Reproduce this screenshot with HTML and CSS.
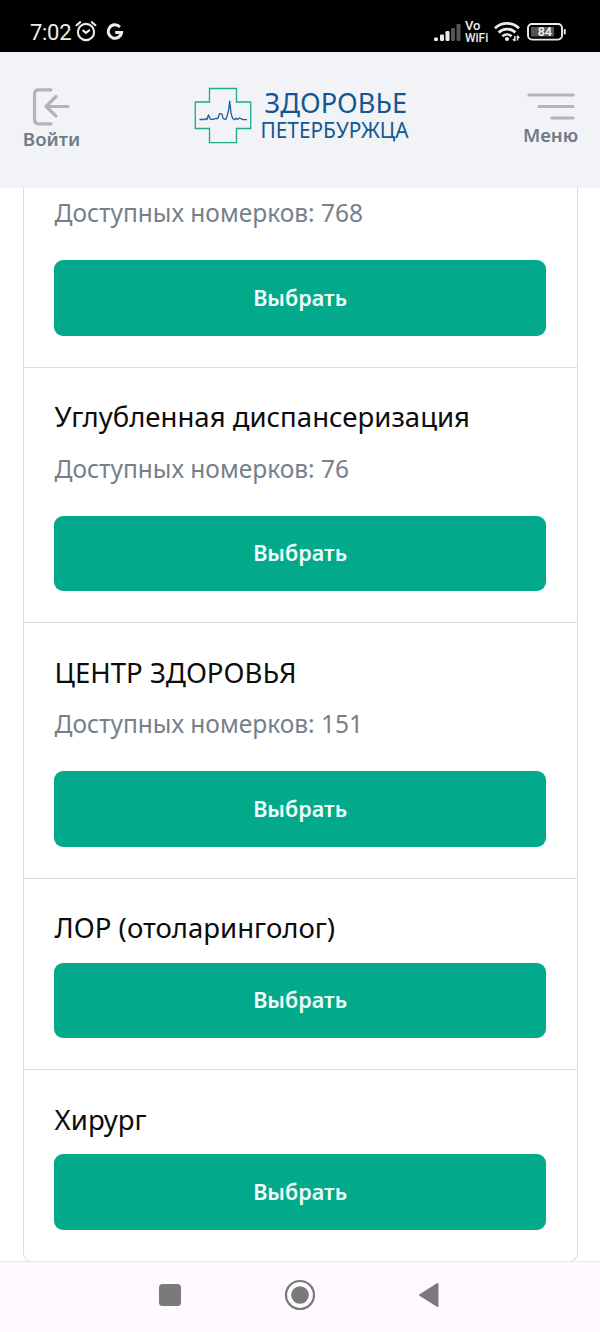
FILE: index.html
```html
<!DOCTYPE html>
<html lang="ru">
<head>
<meta charset="utf-8">
<title>Здоровье петербуржца</title>
<link rel="stylesheet" href="styles.css">
</head>
<body>
<div class="screen">
  <div class="status">
    <span class="clock">7:02</span>
    <svg class="alarm" width="24" height="22" viewBox="0 0 24 22" fill="none" stroke="#ececec" stroke-width="2.1" stroke-linecap="round" stroke-linejoin="round"><circle cx="12" cy="12" r="8.1"/><path d="M2.6 5.2 6.2 2.1M21.4 5.2 17.8 2.1M9.2 10.6l2.8 2.3 3.2-2.5"/></svg>
    <svg class="google" width="18" height="18" viewBox="0 0 18 18" fill="none" stroke="#ececec" stroke-width="3"><path d="M13.9 4A6.7 6.7 0 1 0 15.6 9.6H9.2"/></svg>
    <span class="spacer"></span>
    <svg class="signal" width="28" height="20" viewBox="0 0 28 20"><g fill="#ececec"><rect x="0" y="13.5" width="4" height="3.5" rx="1.2"/><rect x="6" y="10.5" width="4" height="6.5" rx="1.2"/><rect x="11.5" y="7" width="4" height="10" rx="1.2"/></g><g fill="#555"><rect x="17" y="4" width="4" height="13" rx="1.2"/><rect x="22.5" y="0" width="4" height="17" rx="1.2"/></g></svg>
    <span class="vowifi"><span class="vo">Vo</span><span>WiFi</span></span>
    <svg class="wifi" width="27" height="21" viewBox="0 0 27 21" fill="none" stroke="#ececec" stroke-width="2.7"><path d="M1 7.3a17.2 17.2 0 0 1 24 0M4.6 11.5a12 12 0 0 1 16.8 0M8.4 15.2a7 7 0 0 1 9.2 0"/><circle cx="13" cy="18" r="2.1" fill="#ececec" stroke="none"/><path stroke-width="1.5" d="M20.8 20v-5M19 18l1.8 2M23.5 14.5v5M23.5 15l1.8 2"/></svg>
    <svg class="battery" width="40" height="18" viewBox="0 0 40 18"><rect x="1" y="1" width="34" height="15.6" rx="4" fill="none" stroke="#ececec" stroke-width="1.9"/><rect x="4" y="4" width="23" height="9.6" rx="1" fill="#555"/><rect x="36.8" y="6" width="1.9" height="5.5" rx=".8" fill="#ececec"/><text x="17.8" y="13.3" text-anchor="middle" class="battery-text">84</text></svg>
  </div>
  <header class="header">
    <div class="action login">
      <svg width="38" height="38" viewBox="0 0 38 38" fill="none" stroke="#b2b3bd" stroke-width="3.2" stroke-linecap="round" stroke-linejoin="round"><path d="M19 1.8H6.5q-4 0-4 4v26q0 4 4 4H19M36 18.5H15M24 8.5l-10 10 10 9.5"/></svg>
      <span>Войти</span>
    </div>
    <svg class="logo" width="220" height="62" viewBox="0 0 220 62"><path d="M19.5 3.5h27v13.5h14.2v26.5H46.5v14.2h-27V43.5H5.3V17h14.2z" fill="none" stroke="#20a98b" stroke-width="1.3"/><path d="M9.5 34.5h5l1.3-1 1.2 1 1.5-4.7 1.7 4.2 3 .4 2.3-.9h2.4l1.5-4.8 2.5.1 1.3 4.8 2.7.8 1.2-3.6 1.4-5 1.2-9.7 1.4 12.5 1.6 4.9 2 1.2 1.3-1.5 1.5 1.2 1.7-1.3 1.8.5 2 1H57" fill="none" stroke="#235f98" stroke-width="1.3" stroke-linejoin="round"/><text class="logo-text logo-big" x="74.5" y="28" textLength="142.5" lengthAdjust="spacingAndGlyphs">ЗДОРОВЬЕ</text><text class="logo-text logo-small" x="70.5" y="53" textLength="148" lengthAdjust="spacingAndGlyphs">ПЕТЕРБУРЖЦА</text></svg>
    <div class="action menu">
      <svg width="48" height="28" viewBox="0 0 48 28" stroke="#b2b3bd" stroke-width="3.2" stroke-linecap="round"><path d="M2 2h44M12 13.5h34M25 25h21"/></svg>
      <span>Меню</span>
    </div>
  </header>
  <main class="content">
    <section class="list">
      <article class="item partial"><p>Доступных номерков: 768</p><button>Выбрать</button></article>
      <article class="item"><h2>Углубленная диспансеризация</h2><p>Доступных номерков: 76</p><button>Выбрать</button></article>
      <article class="item"><h2>ЦЕНТР ЗДОРОВЬЯ</h2><p>Доступных номерков: 151</p><button>Выбрать</button></article>
      <article class="item"><h2>ЛОР (отоларинголог)</h2><button>Выбрать</button></article>
      <article class="item"><h2>Хирург</h2><button>Выбрать</button></article>
    </section>
  </main>
  <nav class="nav">
    <svg width="22" height="22" viewBox="0 0 22 22"><rect width="22" height="22" rx="3.5" fill="#7a7a7a"/></svg>
    <svg width="32" height="32" viewBox="0 0 32 32"><circle cx="16" cy="16" r="14" fill="none" stroke="#7a7a7a" stroke-width="2.2"/><circle cx="16" cy="16" r="8.8" fill="#7a7a7a"/></svg>
    <svg width="22" height="26" viewBox="0 0 22 26"><path d="M2 13 19.5 2v22z" fill="#7a7a7a" stroke="#7a7a7a" stroke-width="2" stroke-linejoin="round"/></svg>
  </nav>
</div>
</body>
</html>
```
FILE: styles.css
```css
* { box-sizing: border-box; }
body { margin: 0; background: #fff; font-family: "Noto Sans", sans-serif; }
.screen { width: 600px; height: 1332px; display: flex; flex-direction: column; overflow: hidden; }
.status { height: 51.5px; flex: none; background: #000; display: flex; align-items: flex-start; padding: 0 33px 0 30px; color: #ececec; }
.clock { font: 22px/26px Roboto, sans-serif; margin-top: 20px; width: 44px; letter-spacing: -0.3px; }
.alarm { margin: 20px 0 0 0; }
.google { margin: 22.5px 0 0 7.5px; }
.spacer { flex: 1; }
.signal { margin-top: 24px; }
.vowifi { margin: 20px 0 0 3px; width: 26px; display: flex; flex-direction: column; font: 500 12px/12px Roboto, sans-serif; }
.vo { font-size: 13px; }
.wifi { margin: 21px 0 0 3px; }
.battery { margin: 23px 0 0 6px; }
.battery-text { font: 700 12.5px Roboto, sans-serif; fill: #ececec; }
.header { height: 136.5px; flex: none; background: #f1f3f7; display: flex; justify-content: space-between; align-items: flex-start; padding: 0 22px 0 23px; }
.action { display: flex; flex-direction: column; align-items: center; color: #717b87; font-weight: 600; font-size: 18.7px; line-height: 24px; }
.login { width: 57px; padding-top: 36px; }
.login span { margin-top: 1px; }
.login svg { margin-right: 2px; }
.menu { width: 55px; padding-top: 41px; font-size: 18.6px; }
.menu svg { margin-right: 0; }
.menu span { margin-top: 2px; }
.logo { margin: 33px 3px 0 0; flex: none; overflow: visible; }
.logo-text { fill: #145790; }
.logo-big { font-size: 27px; }
.logo-small { font-size: 21.5px; }
.content { flex: 1; min-height: 0; padding: 0 22px 0 23px; }
.list { border: 1px solid #dcdcdf; border-top: 0; border-radius: 0 0 9px 9px; height: 1073.5px; }
.item { border-top: 1px solid #dcdcdf; padding: 31px 31.2px 31px 30.6px; display: flex; flex-direction: column; }
.partial { border-top: 0; padding-top: 8.2px; }
h2 { margin: -0.5px 0 15.5px; font-weight: 400; font-size: 27.55px; line-height: 38px; color: #0c0c0c; }
p { margin: 0 0 30px; font-size: 24.5px; line-height: 34px; color: #76808b; }
button { border: 0; border-radius: 9px; height: 75.5px; flex: none; background: #02aa8b; color: #effcfa; font: 600 21.6px/28px "Noto Sans", sans-serif; padding: 0; margin-left: -0.2px; }
.nav { height: 71px; flex: none; background: #fefaff; border-top: 1.5px solid #eee5dc; display: flex; align-items: center; padding: 0 160px 4px 159px; justify-content: space-between; }
```
